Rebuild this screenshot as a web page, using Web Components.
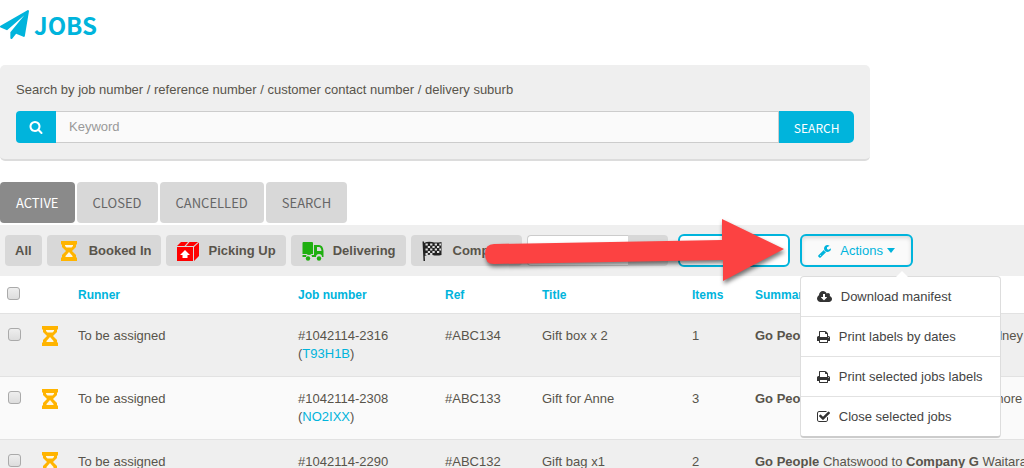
<!DOCTYPE html>
<html lang="en">
<head>
<meta charset="utf-8">
<meta name="viewport" content="width=device-width, initial-scale=1">
<title>Jobs</title>
<style>
    html { overflow-x: hidden; }
    body {
        margin: 0;
        height: 100vh;
        overflow: hidden;
        background: #fff;
        color: #58544b;
        font: 13px/18px "Liberation Sans", Arial, sans-serif;
        --brand: #00b4dc;
        --panel: #efefef;
        --chip: #d8d8d8;
        --narrow: "Noto Sans CJK SC", "Liberation Sans", sans-serif;
    }
</style>
</head>
<body>
<jobs-page></jobs-page>

<script>
const ICONS = {
    plane: ['0 0 1792 1792', '<path d="M1764 11q33 24 27 64l-256 1536q-5 29-32 45-14 8-31 8-11 0-24-5l-453-185-242 295q-18 23-49 23-13 0-22-4-19-7-30.5-23.5t-11.5-36.5v-349l864-1059-1069 925-395-162q-37-14-40-55-2-40 32-59l1664-960q15-9 32-9 20 0 36 11z"/>'],
    search: ['0 0 1792 1792', '<path d="M1216 832q0-185-131.5-316.5t-316.5-131.5-316.5 131.5-131.5 316.5 131.5 316.5 316.5 131.5 316.5-131.5 131.5-316.5zm512 832q0 52-38 90t-90 38q-54 0-90-38l-343-342q-179 124-399 124-143 0-273.5-55.5t-225-150-150-225-55.5-273.5 55.5-273.5 150-225 225-150 273.5-55.5 273.5 55.5 225 150 150 225 55.5 273.5q0 220-124 399l343 343q37 37 37 90z"/>'],
    wrench: ['64 0 1728 1792', '<path d="M448 1472q0-26-19-45t-45-19-45 19-19 45 19 45 45 19 45-19 19-45zm644-420l-682 682q-37 37-90 37-52 0-91-37l-106-108q-38-36-38-90 0-53 38-91l681-681q39 98 114.5 173.5t173.5 114.5zm634-435q0 39-23 106-47 134-164.5 217.5t-258.5 83.5q-185 0-316.5-131.5t-131.5-316.5 131.5-316.5 316.5-131.5q58 0 121.5 16.5t107.5 46.5q16 11 16 28t-16 28l-293 169v224l193 107q5-3 79-48.5t135.5-81 70.5-35.5q15 0 23.5 10t8.5 25z"/>'],
    cloud: ['0 0 1920 1792', '<path d="M1280 928q0-14-9-23t-23-9h-224v-352q0-13-9.5-22.5t-22.5-9.5h-192q-13 0-22.5 9.5t-9.5 22.5v352h-224q-13 0-22.5 9.5t-9.5 22.5q0 14 9 23l352 352q9 9 23 9t23-9l351-351q10-12 10-24zm640 224q0 159-112.5 271.5t-271.5 112.5h-1088q-185 0-316.5-131.5t-131.5-316.5q0-130 70-240t188-165q-2-30-2-43 0-212 150-362t362-150q156 0 285.5 87t188.5 231q71-62 166-62 106 0 181 75t75 181q0 76-41 138 130 31 213.5 135.5t83.5 238.5z"/>'],
    print: ['64 0 1664 1792', '<path d="M448 1536h896v-256h-896v256zm0-640h896v-384h-160q-40 0-68-28t-28-68v-160h-640v640zm1152 64q0-26-19-45t-45-19-45 19-19 45 19 45 45 19 45-19 19-45zm128 0v416q0 13-9.5 22.5t-22.5 9.5h-224v160q0 40-28 68t-68 28h-960q-40 0-68-28t-28-68v-160h-224q-13 0-22.5-9.5t-9.5-22.5v-416q0-79 56.5-135.5t135.5-56.5h64v-544q0-40 28-68t68-28h672q40 0 88 20t76 48l152 152q28 28 48 76t20 88v256h64q79 0 135.5 56.5t56.5 135.5z"/>'],
    check: ['64 0 1664 1792', '<path d="M1472 930v318q0 119-84.5 203.5t-203.5 84.5h-832q-119 0-203.5-84.5t-84.5-203.5v-832q0-119 84.5-203.5t203.5-84.5h832q63 0 117 25 15 7 18 23 3 17-9 29l-49 49q-10 10-23 10-3 0-9-2-23-6-45-6h-832q-66 0-113 47t-47 113v832q0 66 47 113t113 47h832q66 0 113-47t47-113v-254q0-13 9-22l64-64q10-10 23-10 6 0 12 3 20 8 20 29zm231-489l-814 814q-24 24-57 24t-57-24l-430-430q-24-24-24-57t24-57l110-110q24-24 57-24t57 24l263 263 647-647q24-24 57-24t57 24l110 110q24 24 24 57t-24 57z"/>'],
    hourglass: ['0 0 24 24', '<path fill="#ffb400" d="M4 2h16v3.500h-1V8l-4 4 4 4v2.500h1V22H4v-3.500h1V16l4-4-4-4V5.500H4z"/><path fill="#fff" d="M8 6h8v1l-1.500 1.500h-5L8 7zM12 13l3.500 4v1h-7v-1z" opacity=".9"/>'],
    box: ['0 0 24 24', '<path fill="red" d="M1 8h16v14H1zM5 3h7L8.500 7H1zM13.500 3H22l-4.500 4H10zM18 8l5-4.500V17l-5 5z"/><path fill="#fff" d="M9 11l5 5h-2.500v3h-5v-3H4z"/>'],
    truck: ['0 0 24 24', '<path fill="#1faf10" d="M2.500 3H11q1 0 1 1v11H1.500V4q0-1 1-1zM13 6h5q4 0 4.500 6v6H21a3 3 0 0 0-6 0h-4a3 3 0 0 0-6 0H1.500v-2H13z"/><path fill="#d8d8d8" d="M16 8h2q2 0 2.500 4H16z"/><circle cx="7" cy="19.500" r="2.200" fill="#1faf10"/><circle cx="18" cy="19.500" r="2.200" fill="#1faf10"/>'],
    flag: ['0 0 24 24', '<path fill="#222" d="M1.500 2.500H3L4 22H2.500zM3 4q4-2 8-1t9.500 0v13q-5 1-9 0t-8 1z"/><path stroke="#ddd" stroke-width="2" stroke-dasharray="2.300 2.300" d="M4.500 5.500H20M6.800 8H20M4.500 10.500H20M6.800 13H20M4.500 15H12"/>']
}

class GoIcon extends HTMLElement {
    static get observedAttributes() { return ['name'] }

    constructor() {
        super()
        this.attachShadow({mode: 'open'})
    }

    attributeChangedCallback(name, oldValue, newValue) {
        let [viewBox, shapes] = ICONS[newValue]
        this.shadowRoot.innerHTML = `
            <style>
                :host { display: inline-flex; flex: none; height: 14px; }
                svg { display: block; height: 100%; width: auto; fill: currentColor; }
            </style>
            <svg viewBox="${viewBox}" aria-hidden="true">${shapes}</svg>`
    }
}
customElements.define('go-icon', GoIcon)

// base for the elements that only need their template cloned
class Templated extends HTMLElement {
    constructor() {
        super()
        this.attachShadow({mode: 'open'})
        let template = document.createElement('template')
        template.innerHTML = this.constructor.markup
        this.shadowRoot.append(template.content.cloneNode(true))
    }
}

class JobSearch extends Templated {
    static markup = `
<style>
    :host { display: block; }
    form {
        box-sizing: border-box;
        width: 85%;
        padding: 16px;
        border-radius: 5px;
        border-bottom: 2px solid #dcdcdc;
        background: var(--panel);
    }
    label { display: block; margin-bottom: 12px; }
    .group { display: flex; height: 32px; }
    button {
        border: 0;
        padding: 0 15px;
        background: var(--brand);
        color: #fff;
        font: 12px var(--narrow);
    }
    .icon { display: flex; align-items: center; padding: 0 13px; border-radius: 4px 0 0 4px; }
    .submit { border-radius: 0 5px 5px 0; }
    input {
        box-sizing: border-box;
        flex: 1;
        min-width: 0;
        padding: 0 13px;
        border: 1px solid #ccc;
        border-left: 0;
        background: #fafafa;
        color: inherit;
        font: inherit;
    }
    input::placeholder { color: #999; opacity: 1; }
</style>
<form onsubmit="return false">
    <label for="keyword">Search by job number / reference number / customer contact number / delivery suburb</label>
    <div class="group">
        <button class="icon" aria-label="Find"><go-icon name="search"></go-icon></button>
        <input id="keyword" type="text" placeholder="Keyword">
        <button class="submit">SEARCH</button>
    </div>
</form>`
}
customElements.define('job-search', JobSearch)

class JobTab extends Templated {
    static markup = `
<style>
    :host { display: block; }
    button {
        height: 41px;
        padding: 0 16px;
        border: 0;
        border-radius: 4px;
        background: var(--chip);
        color: #666;
        font: 13px var(--narrow);
    }
    :host([active]) button { background: #8a8a8a; color: #fff; }
</style>
<button><slot></slot></button>`
}
customElements.define('job-tab', JobTab)

class FilterChip extends Templated {
    static markup = `
<style>
    :host { display: block; }
    button {
        display: flex;
        align-items: center;
        gap: 8px;
        height: 31px;
        padding: 0 10px;
        border: 0;
        border-radius: 4px;
        background: var(--chip);
        color: inherit;
        font: bold 13px "Liberation Sans", Arial, sans-serif;
        white-space: nowrap;
    }
    ::slotted(go-icon) { height: 24px; }
</style>
<button><slot name="icon"></slot><slot></slot></button>`
}
customElements.define('filter-chip', FilterChip)

class MenuItem extends Templated {
    static markup = `
<style>
    :host { display: block; }
    :host(:not(:first-child)) { border-top: 1px solid #e2e2e2; }
    button {
        display: flex;
        align-items: center;
        gap: 9px;
        width: 100%;
        height: 39px;
        padding: 0 16px;
        border: 0;
        background: none;
        color: #444;
        font: inherit;
        white-space: nowrap;
    }
    ::slotted(go-icon) { color: #333; }
</style>
<button role="menuitem"><slot name="icon"></slot><slot></slot></button>`
}
customElements.define('menu-item', MenuItem)

class ActionsMenu extends Templated {
    static markup = `
<style>
    :host { display: block; position: relative; }
    .toggle {
        display: flex;
        align-items: center;
        gap: 9px;
        height: 33px;
        padding: 0 16px;
        border: 2px solid var(--brand);
        border-radius: 6px;
        background: #fafafa;
        box-shadow: inset 0 2px 4px #0002;
        color: var(--brand);
        font: inherit;
    }
    .label { display: flex; align-items: center; gap: 4px; }
    .caret { border: 4px solid transparent; border-top: 5px solid currentColor; border-bottom: 0; }
    .menu {
        position: absolute;
        z-index: 2;
        top: 42px;
        left: 0;
        width: 199px;
        border: 1px solid #ddd;
        border-bottom: 2px solid #ccc;
        border-radius: 4px;
        background: #fff;
    }
    .menu::before {
        content: "";
        position: absolute;
        bottom: 100%;
        left: 95px;
        border: 6px solid transparent;
        border-bottom-color: #fff;
        border-top: 0;
    }
</style>
<button class="toggle" aria-haspopup="menu" aria-expanded="true">
    <go-icon name="wrench"></go-icon>
    <span class="label">Actions <span class="caret"></span></span>
</button>
<div class="menu" role="menu"><slot></slot></div>`

    connectedCallback() {
        let toggle = this.shadowRoot.querySelector('.toggle'),
            menu = this.shadowRoot.querySelector('.menu')
        toggle.onclick = () => {
            menu.hidden = !menu.hidden
            menu.style.display = menu.hidden ? 'none' : ''
            toggle.setAttribute('aria-expanded', String(!menu.hidden))
        }
    }
}
customElements.define('actions-menu', ActionsMenu)

class JobToolbar extends Templated {
    static markup = `
<style>
    :host {
        display: flex;
        align-items: center;
        position: relative;
        gap: 10px;
        height: 51px;
        padding-left: 5px;
        box-sizing: border-box;
        background: var(--panel);
    }
    .filters { display: flex; gap: 5px; }
    .finder { display: flex; height: 31px; }
    .finder input {
        box-sizing: border-box;
        width: 101px;
        padding: 0 8px;
        border: 1px solid #ccc;
        border-right: 0;
        border-radius: 4px 0 0 4px;
        background: #fff;
        font: inherit;
    }
    .finder button { width: 40px; border: 0; border-radius: 0 4px 4px 0; background: var(--chip); }
    .outline {
        width: 112px;
        height: 33px;
        border: 2px solid var(--brand);
        border-radius: 6px;
        background: #fff;
    }
    /* callout that points at the actions button */
    .pointer {
        position: absolute;
        z-index: 1;
        left: 480px;
        top: -11px;
        width: 310px;
        height: 76px;
        filter: drop-shadow(1px 3px 2px #0008);
        pointer-events: none;
    }
</style>
<div class="filters">
    <filter-chip>All</filter-chip>
    <filter-chip><go-icon slot="icon" name="hourglass"></go-icon>Booked In</filter-chip>
    <filter-chip><go-icon slot="icon" name="box"></go-icon>Picking Up</filter-chip>
    <filter-chip><go-icon slot="icon" name="truck"></go-icon>Delivering</filter-chip>
    <filter-chip><go-icon slot="icon" name="flag"></go-icon>Complete</filter-chip>
    <div class="finder"><input type="text" aria-label="Filter jobs"><button aria-label="Apply filter"></button></div>
</div>
<button class="outline" aria-label="Date range"></button>
<actions-menu>
    <menu-item><go-icon slot="icon" name="cloud"></go-icon>Download manifest</menu-item>
    <menu-item><go-icon slot="icon" name="print"></go-icon>Print labels by dates</menu-item>
    <menu-item><go-icon slot="icon" name="print"></go-icon>Print selected jobs labels</menu-item>
    <menu-item><go-icon slot="icon" name="check"></go-icon>Close selected jobs</menu-item>
</actions-menu>
<svg class="pointer" viewBox="0 0 310 76" aria-hidden="true">
    <path fill="#fc4242" d="M14 30L242 26V5L304 35L243 67V46L14 50Q5 50 5 40T14 30z"/>
</svg>`
}
customElements.define('job-toolbar', JobToolbar)

const JOBS = [
    {number: '#1042114-2316', code: 'T93H1B', ref: '#ABC134', title: 'Gift box x 2', items: 1, from: 'Chatswood', to: 'Company J', suburb: 'Sydney'},
    {number: '#1042114-2308', code: 'NO2IXX', ref: '#ABC133', title: 'Gift for Anne', items: 3, from: 'Chatswood', to: 'Company I', suburb: 'Lismore'},
    {number: '#1042114-2290', code: 'K7Q2MD', ref: '#ABC132', title: 'Gift bag x1', items: 2, from: 'Chatswood', to: 'Company G', suburb: 'Waitara'}
]

class JobTable extends Templated {
    static markup = `
<style>
    :host { display: block; overflow: hidden; }
    table { width: 100%; table-layout: fixed; border-collapse: collapse; }
    .check { width: 35px; }
    .status { width: 43px; }
    .runner { width: 220px; }
    .number { width: 147px; }
    .ref { width: 97px; }
    .title { width: 150px; }
    .items { width: 63px; }
    th { height: 36px; padding: 1px 0 0; color: var(--brand); font-size: 12px; text-align: left; }
    td { padding: 13px 0; border-top: 1px solid #e2e2e2; vertical-align: top; white-space: nowrap; }
    tbody tr:nth-child(odd) { background: var(--panel); }
    tbody tr:nth-child(even) { background: #fafafa; }
    a { color: var(--brand); text-decoration: none; }
    input {
        appearance: none;
        display: block;
        box-sizing: border-box;
        width: 13px;
        height: 13px;
        margin: 1px 0 0 8px;
        border: 1px solid #aaa;
        border-radius: 3px;
        background: linear-gradient(#eee, #ddd);
    }
    th input { margin: 0 0 4px 7px; }
    input:checked { background: var(--brand); }
    td go-icon { height: 24px; margin: -3px 0 0 3px; }
</style>
<table>
    <colgroup>
        <col class="check"><col class="status"><col class="runner"><col class="number">
        <col class="ref"><col class="title"><col class="items"><col>
    </colgroup>
    <thead>
        <tr>
            <th><input type="checkbox" aria-label="Select all jobs"></th><th></th>
            <th>Runner</th><th>Job number</th><th>Ref</th><th>Title</th><th>Items</th><th>Summary</th>
        </tr>
    </thead>
    <tbody></tbody>
</table>`

    connectedCallback() {
        this.shadowRoot.querySelector('tbody').innerHTML = JOBS.map(job => `
            <tr>
                <td><input type="checkbox" aria-label="Select job ${job.number}"></td>
                <td><go-icon name="hourglass"></go-icon></td>
                <td>To be assigned</td>
                <td>${job.number}<br>(<a href="#${job.code}">${job.code}</a>)</td>
                <td>${job.ref}</td>
                <td>${job.title}</td>
                <td>${job.items}</td>
                <td><b>Go People</b> ${job.from} to <b>${job.to}</b> ${job.suburb}</td>
            </tr>`).join('')
    }
}
customElements.define('job-table', JobTable)

class JobsPage extends Templated {
    static markup = `
<style>
    :host { display: block; }
    h1 {
        display: flex;
        align-items: center;
        gap: 5px;
        margin: 0;
        padding: 8px 0 24px;
        color: var(--brand);
        font: bold 24px/33px var(--narrow);
    }
    h1 go-icon { height: 29px; }
    nav { display: flex; gap: 2px; padding: 21px 0 2px; }
</style>
<h1><go-icon name="plane"></go-icon>JOBS</h1>
<job-search></job-search>
<nav>
    <job-tab active>ACTIVE</job-tab>
    <job-tab>CLOSED</job-tab>
    <job-tab>CANCELLED</job-tab>
    <job-tab>SEARCH</job-tab>
</nav>
<job-toolbar></job-toolbar>
<job-table></job-table>`
}
customElements.define('jobs-page', JobsPage)
</script>
</body>
</html>
